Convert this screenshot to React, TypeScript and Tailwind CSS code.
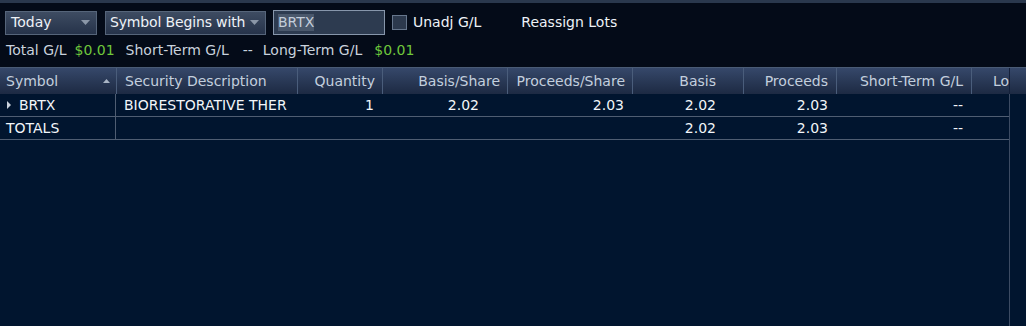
import React from "react";

const font = { fontFamily: '"DejaVu Sans", Verdana, sans-serif' };

function Caret() {
  return (
    <svg width="9" height="5" viewBox="0 0 9 5" className="shrink-0">
      <path d="M0 0 L9 0 L4.5 5 Z" fill="#8b97a8" />
    </svg>
  );
}

type Col = { label: string; w: number; align: "left" | "right"; hpad: string };

const cols: Col[] = [
  { label: "Symbol", w: 116, align: "left", hpad: "pl-[6px]" },
  { label: "Security Description", w: 181, align: "left", hpad: "pl-[8px]" },
  { label: "Quantity", w: 85, align: "right", hpad: "pr-[7px]" },
  { label: "Basis/Share", w: 125, align: "right", hpad: "pr-[7px]" },
  { label: "Proceeds/Share", w: 125, align: "right", hpad: "pr-[7px]" },
  { label: "Basis", w: 111, align: "right", hpad: "pr-[27px]" },
  { label: "Proceeds", w: 93, align: "right", hpad: "pr-[8px]" },
  { label: "Short-Term G/L", w: 135, align: "right", hpad: "pr-[8px]" },
];

export default function App() {
  return (
    <div
      className="w-[1026px] h-[326px] bg-[#01152f] flex flex-col overflow-hidden text-[14px]"
      style={font}
    >
      <div className="h-[3px] bg-[#2a384d] shrink-0" />
      {/* Toolbar */}
      <div className="h-[64px] shrink-0 bg-[#040b18] flex flex-col">
        <div className="flex items-center pt-[7px] pl-[5px] h-[32px]">
          <div className="w-[92px] h-[24px] flex items-center justify-between pl-[5px] pr-[6px] border border-[#56657a] bg-gradient-to-b from-[#3e4c62] to-[#26334a] text-[#eef2f7]">
            <span>Today</span>
            <Caret />
          </div>
          <div className="ml-[8px] w-[161px] h-[24px] flex items-center justify-between pl-[4px] pr-[6px] border border-[#56657a] bg-gradient-to-b from-[#3e4c62] to-[#26334a] text-[#eef2f7] whitespace-nowrap">
            <span className="tracking-[-0.15px]">Symbol Begins with</span>
            <Caret />
          </div>
          <div className="ml-[7px] w-[112px] h-[25px] flex items-center pl-[4px] border border-[#8796ab] bg-[#2d3b50]">
            <span className="bg-[#4a586c] text-[#c4cedb] leading-[17px]">BRTX</span>
          </div>
          <div className="ml-[7px] w-[15px] h-[15px] border border-[#66768c] bg-[#2c394d]" />
          <span className="ml-[6px] text-[#eef2f7]">Unadj G/L</span>
          <span className="ml-[40px] text-[#eef2f7]">Reassign Lots</span>
        </div>
        <div className="flex items-center pl-[6px] h-[22px] mt-[4px] text-[#c9d2dd] whitespace-nowrap">
          <span>Total G/L</span>
          <span className="ml-[8px] text-[#6fc73c]">$0.01</span>
          <span className="ml-[11px]">Short-Term G/L</span>
          <span className="ml-[14px]">--</span>
          <span className="ml-[10px]">Long-Term G/L</span>
          <span className="ml-[12px] text-[#6fc73c]">$0.01</span>
        </div>
      </div>
      {/* Header */}
      <div className="h-[27px] shrink-0 flex border-t border-[#4a5b75] bg-gradient-to-b from-[#36486a] to-[#1d2a43] text-[#c3cfde] whitespace-nowrap">
        {cols.map((c, i) => (
          <div
            key={c.label}
            style={{ width: c.w }}
            className={`h-full flex items-center shrink-0 overflow-hidden ${i > 0 ? "border-l border-[#4a5d7b]" : ""} ${
              c.align === "right" ? "justify-end " + c.hpad : c.hpad
            } ${i === 0 ? "justify-between pr-[6px]" : ""}`}
          >
            <span>{c.label}</span>
            {i === 0 && (
              <svg width="7" height="4" viewBox="0 0 7 4">
                <path d="M0 4 L7 4 L3.5 0 Z" fill="#a9b5c5" />
              </svg>
            )}
          </div>
        ))}
        <div className="w-[38px] h-full shrink-0 border-l border-[#4a5d7b] pl-[21px] flex items-center overflow-hidden">
          <span>Lo</span>
        </div>
        <div className="flex-1 h-full border-l border-[#14203a]" />
      </div>
      {/* Body */}
      <div className="flex-1 flex">
        <div className="w-[1009px] shrink-0 text-[#f2f5f9] whitespace-nowrap">
          <div className="h-[23px] flex border-b border-[#4f5d72]">
            <div className="w-[116px] shrink-0 flex items-center pl-[7px] border-r border-[#4f5d72]">
              <svg width="4" height="8" viewBox="0 0 4 8">
                <path d="M0 0 L4 4 L0 8 Z" fill="#c9d1dc" />
              </svg>
              <span className="ml-[8px]">BRTX</span>
            </div>
            <div className="w-[181px] shrink-0 flex items-center pl-[8px] overflow-hidden">BIORESTORATIVE THER</div>
            <div className="w-[85px] shrink-0 flex items-center justify-end pr-[8px]">1</div>
            <div className="w-[125px] shrink-0 flex items-center justify-end pr-[28px]">2.02</div>
            <div className="w-[125px] shrink-0 flex items-center justify-end pr-[8px]">2.03</div>
            <div className="w-[111px] shrink-0 flex items-center justify-end pr-[27px]">2.02</div>
            <div className="w-[93px] shrink-0 flex items-center justify-end pr-[8px]">2.03</div>
            <div className="w-[135px] shrink-0 flex items-center justify-end pr-[8px]">--</div>
          </div>
          <div className="h-[23px] flex border-b border-[#4f5d72]">
            <div className="w-[116px] shrink-0 flex items-center pl-[6px] border-r border-[#4f5d72]">TOTALS</div>
            <div className="w-[181px] shrink-0" />
            <div className="w-[85px] shrink-0" />
            <div className="w-[125px] shrink-0" />
            <div className="w-[125px] shrink-0" />
            <div className="w-[111px] shrink-0 flex items-center justify-end pr-[27px]">2.02</div>
            <div className="w-[93px] shrink-0 flex items-center justify-end pr-[8px]">2.03</div>
            <div className="w-[135px] shrink-0 flex items-center justify-end pr-[8px]">--</div>
          </div>
        </div>
        <div className="flex-1 border-l border-[#3c4b63]" />
      </div>
    </div>
  );
}
